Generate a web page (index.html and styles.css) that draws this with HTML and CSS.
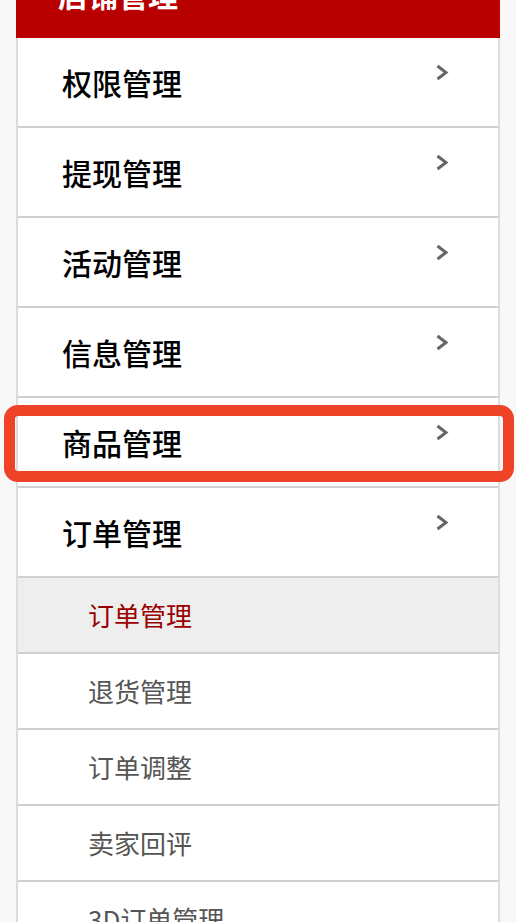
FILE: index.html
```html
<!DOCTYPE html>
<html lang="zh-CN">
<head>
  <meta charset="UTF-8">
  <meta name="viewport" content="width=device-width, initial-scale=1.0">
  <title>店铺管理</title>
  <link rel="stylesheet" href="styles.css">
</head>
<body>
  <div class="menu">
    <div class="menu-title">店铺管理</div>
    <ul class="menu-list">
      <li class="menu-item"><span>权限管理</span><svg class="arrow" viewBox="0 0 14 17"><path d="M2.5 2 L11 8.5 L2.5 15"/></svg></li>
      <li class="menu-item"><span>提现管理</span><svg class="arrow" viewBox="0 0 14 17"><path d="M2.5 2 L11 8.5 L2.5 15"/></svg></li>
      <li class="menu-item"><span>活动管理</span><svg class="arrow" viewBox="0 0 14 17"><path d="M2.5 2 L11 8.5 L2.5 15"/></svg></li>
      <li class="menu-item"><span>信息管理</span><svg class="arrow" viewBox="0 0 14 17"><path d="M2.5 2 L11 8.5 L2.5 15"/></svg></li>
      <li class="menu-item marked"><span>商品管理</span><svg class="arrow" viewBox="0 0 14 17"><path d="M2.5 2 L11 8.5 L2.5 15"/></svg><div class="mark"></div></li>
      <li class="menu-item"><span>订单管理</span><svg class="arrow" viewBox="0 0 14 17"><path d="M2.5 2 L11 8.5 L2.5 15"/></svg></li>
      <li class="sub-item active">订单管理</li>
      <li class="sub-item">退货管理</li>
      <li class="sub-item">订单调整</li>
      <li class="sub-item">卖家回评</li>
      <li class="sub-item">3D订单管理</li>
    </ul>
  </div>
</body>
</html>
```

FILE: styles.css
```css
body {
  margin: 0;
  background: #f8f8f8;
  font-family: "Noto Sans CJK SC", "Liberation Serif", serif;
}
.menu {
  margin: -40px 16px 0;
  background: #fff;
  border-left: 2px solid #ddd;
  border-right: 2px solid #ddd;
}
.menu-title {
  background: #b80000;
  color: #fff;
  font-size: 30px;
  font-weight: bold;
  line-height: 40px;
  padding: 14px 42px 24px;
  margin: 0 -2px;
}
.menu-list {
  list-style: none;
  margin: 0;
  padding: 0;
}
.menu-item {
  position: relative;
  display: flex;
  justify-content: space-between;
  align-items: center;
  height: 88px;
  padding: 0 49px 0 44px;
  border-bottom: 2px solid #d0d0d0;
  font-size: 30px;
  font-weight: 500;
  color: #000;
}
.arrow {
  width: 14px;
  height: 17px;
  margin-bottom: 20px;
  fill: none;
  stroke: #666;
  stroke-width: 3;
}
.mark {
  position: absolute;
  top: 7px;
  bottom: 4px;
  left: -14px;
  right: -16px;
  border: 11px solid #ee4327;
  border-radius: 14px;
}
.sub-item {
  height: 74px;
  line-height: 74px;
  padding-left: 70px;
  border-bottom: 2px solid #d0d0d0;
  font-size: 26px;
  color: #555;
}
.sub-item.active {
  background: #eee;
  color: #900;
}
```
